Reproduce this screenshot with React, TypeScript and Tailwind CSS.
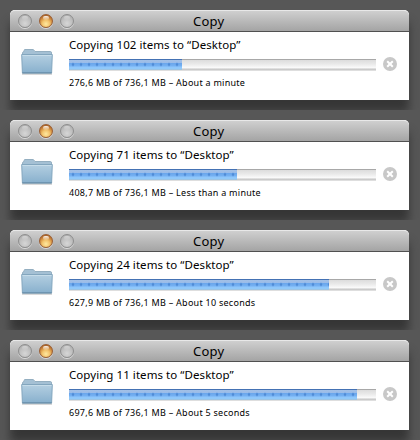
const jobs = [
  { id: 'a', title: 'Copying 102 items to “Desktop”', detail: '276,6 MB of 736,1 MB – About a minute', fill: 113 },
  { id: 'b', title: 'Copying 71 items to “Desktop”', detail: '408,7 MB of 736,1 MB – Less than a minute', fill: 168 },
  { id: 'c', title: 'Copying 24 items to “Desktop”', detail: '627,9 MB of 736,1 MB – About 10 seconds', fill: 260 },
  { id: 'd', title: 'Copying 11 items to “Desktop”', detail: '697,6 MB of 736,1 MB – About 5 seconds', fill: 288 },
];

function Light({ amber = false }: { amber?: boolean }) {
  const tone = amber
    ? 'border-[#9a5f35] bg-[radial-gradient(circle_at_50%_75%,#ffe9a0_0%,#f3c36c_35%,#c98238_65%,#8a4217_100%)]'
    : 'border-[#8e8e8e] bg-[radial-gradient(circle_at_50%_70%,#d6d6d6_0%,#c2c2c2_45%,#a5a5a5_100%)]';
  const shine = amber ? 'from-white/90 to-white/10' : 'from-white/40 to-white/0';
  return (
    <span className={`flex h-[14px] w-[14px] justify-center rounded-full border shadow-[0_1px_0_#d8d8d8] ${tone}`}>
      <span className={`mt-px h-[4px] w-[6px] rounded-full bg-linear-to-b ${shine}`} />
    </span>
  );
}

function Folder() {
  return (
    <svg width="32" height="27" viewBox="0 0 32 27" className="block">
      <defs>
        <linearGradient id="front" x1="0" y1="0" x2="0" y2="1">
          <stop offset="0" stopColor="#b4cfe1" />
          <stop offset="1" stopColor="#88b0cd" />
        </linearGradient>
      </defs>
      <path d="M1 26h30" stroke="#b4b4b4" strokeWidth="1" />
      <path d="M1.5 5Q1.5 4 2.5 4L3.6 1.5H12.3L14 3.5H29.5Q30.5 3.5 30.5 5V9H1.5Z" fill="#a4c0d4" stroke="#94afc1" />
      <path d="M.7 6.5H31.3L30.6 25H1.4Z" fill="url(#front)" stroke="#83a6be" />
      <path d="M1.5 7.5H30.5" stroke="#c6dce9" />
      <path d="M1.3 24.9H30.7" stroke="#6287a3" />
    </svg>
  );
}

function Progress({ width }: { width: number }) {
  return (
    <div className="h-[12px] w-[307px] border-y border-t-[#a8a8a8] border-b-[#dedede] bg-[linear-gradient(#dcdcdc_0,#e9e9e9_4px,#eeeeee_5px,#fbfbfb_8px,#c4c4c4_9px,#d0d0d0_10px)]">
      <div
        className="-mt-px h-[11px] bg-[radial-gradient(ellipse_at_center,#4f8bd6_0_0.5px,transparent_1.7px),linear-gradient(#4472b4_0,#4472b4_1px,#a3c0e6_1px,#9abce9_4px,#69a5eb_4px,#75b1f2_7px,#8ec6fc_8px,#91caf8_10px,#a8bdce_11px)] bg-[length:8px_11px,100%_100%]"
        style={{ width }}
      />
    </div>
  );
}

function CopyWindow({ title, detail, fill }: { title: string; detail: string; fill: number }) {
  return (
    <section className="h-[110px] overflow-hidden bg-[#575757] pt-[10px] pl-[10px]">
      <div className="h-[90px] w-[399px] rounded-t-[5px] bg-white shadow-[0_12px_10px_0px_#363636]">
        <header className="flex h-[22px] items-center rounded-t-[5px] border-t border-b border-t-[#e8e8e8] border-b-[#505050] bg-linear-to-b from-[#cfcfcf] to-[#a4a4a4]">
          <div className="flex w-[180px] gap-[7px] pl-[8px]">
            <Light />
            <Light amber />
            <Light />
          </div>
          <h1 className="w-[39px] pl-[3px] text-[13px] leading-[20px] tracking-[0.2px]">Copy</h1>
        </header>
        <div className="flex h-[68px]">
          <div className="w-[59px] pt-[16px] pl-[11px]">
            <Folder />
          </div>
          <div className="w-[313px]">
            <p className="mt-[4px] h-[18px] text-[11.5px] leading-[18px] tracking-[0.06px] whitespace-nowrap">{title}</p>
            <div className="mt-[5px]">
              <Progress width={fill} />
            </div>
            <p className="mt-[5px] text-[9px] leading-[14px] tracking-[0.26px] whitespace-nowrap">{detail}</p>
          </div>
          <div className="pt-[25px] pl-[1px]">
            <svg width="14" height="14" viewBox="0 0 14 14" className="block">
              <circle cx="7" cy="7" r="7" fill="#c8c8c8" />
              <path d="M4.2 4.2l5.6 5.6M9.8 4.2l-5.6 5.6" stroke="white" strokeWidth="2" />
            </svg>
          </div>
        </div>
      </div>
    </section>
  );
}

export default function App() {
  return (
    <main className="h-[440px] w-[420px] overflow-hidden bg-[#575757] font-['Noto_Sans','Open_Sans',sans-serif] text-black">
      {jobs.map((job) => (
        <CopyWindow key={job.id} title={job.title} detail={job.detail} fill={job.fill} />
      ))}
    </main>
  );
}
